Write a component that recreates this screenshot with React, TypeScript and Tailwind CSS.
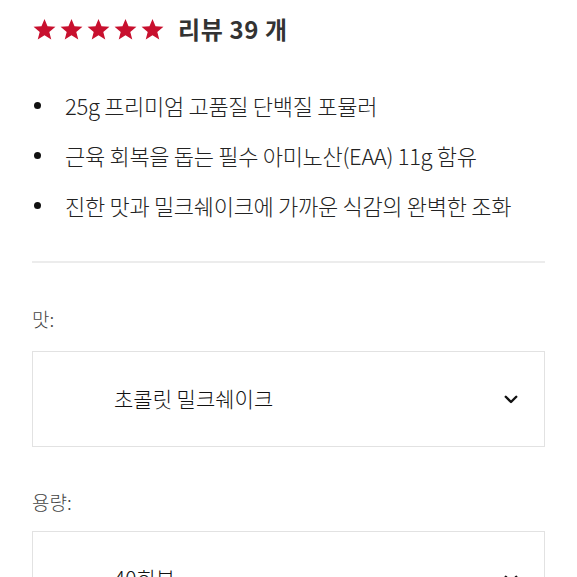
const font = { fontFamily: '"Noto Sans CJK KR", "Noto Sans", sans-serif' };

function Star() {
  return (
    <svg viewBox="0 0 24 24" className="h-[25px] w-[25px] text-[#c8102e]" fill="currentColor">
      <path d="M12 1.8l2.9 7.1 7.6.5-5.9 4.9 1.9 7.4L12 17.6l-6.5 4.1 1.9-7.4-5.9-4.9 7.6-.5z" />
    </svg>
  );
}

const features = [
  '25g 프리미엄 고품질 단백질 포뮬러',
  '근육 회복을 돕는 필수 아미노산(EAA) 11g 함유',
  '진한 맛과 밀크쉐이크에 가까운 식감의 완벽한 조화',
];

function Select({ value }: { value: string }) {
  return (
    <div className="flex h-[96px] items-center justify-between border border-[#e2e2e2] pl-[81px] pr-[24px]">
      <span className="text-[21px] font-light text-[#111]">{value}</span>
      <svg viewBox="0 0 24 24" className="h-[18px] w-[18px]" fill="none" stroke="#111" strokeWidth={3.2} strokeLinecap="round" strokeLinejoin="round">
        <path d="M5 9l7 7 7-7" />
      </svg>
    </div>
  );
}

export default function App() {
  return (
    <div className="min-h-[577px] bg-white px-[32px] pt-[11px]" style={font}>
      <div className="flex items-center">
        <div className="flex gap-[2px]">
          <Star /><Star /><Star /><Star /><Star />
        </div>
        <span className="ml-[13px] text-[24px] font-bold tracking-[0.6px] text-[#333]">리뷰 39 개</span>
      </div>

      <ul className="mt-[43px] flex flex-col gap-[19px]">
        {features.map((f) => (
          <li key={f} className="flex items-center text-[22px] font-light leading-[31px] tracking-[-0.3px] text-[#222]">
            <span className="ml-[2px] mr-[24px] h-[7px] w-[7px] shrink-0 rounded-full bg-[#111]" />
            {f}
          </li>
        ))}
      </ul>

      <div className="mt-[40px] h-[2px] bg-[#ececec]" />

      <div className="mt-[42px] text-[19px] font-light text-[#444]">맛:</div>
      <div className="mt-[17px]">
        <Select value="초콜릿 밀크쉐이크" />
      </div>

      <div className="mt-[41px] text-[19px] font-light text-[#444]">용량:</div>
      <div className="mt-[15px]">
        <Select value="40회분" />
      </div>
    </div>
  );
}
